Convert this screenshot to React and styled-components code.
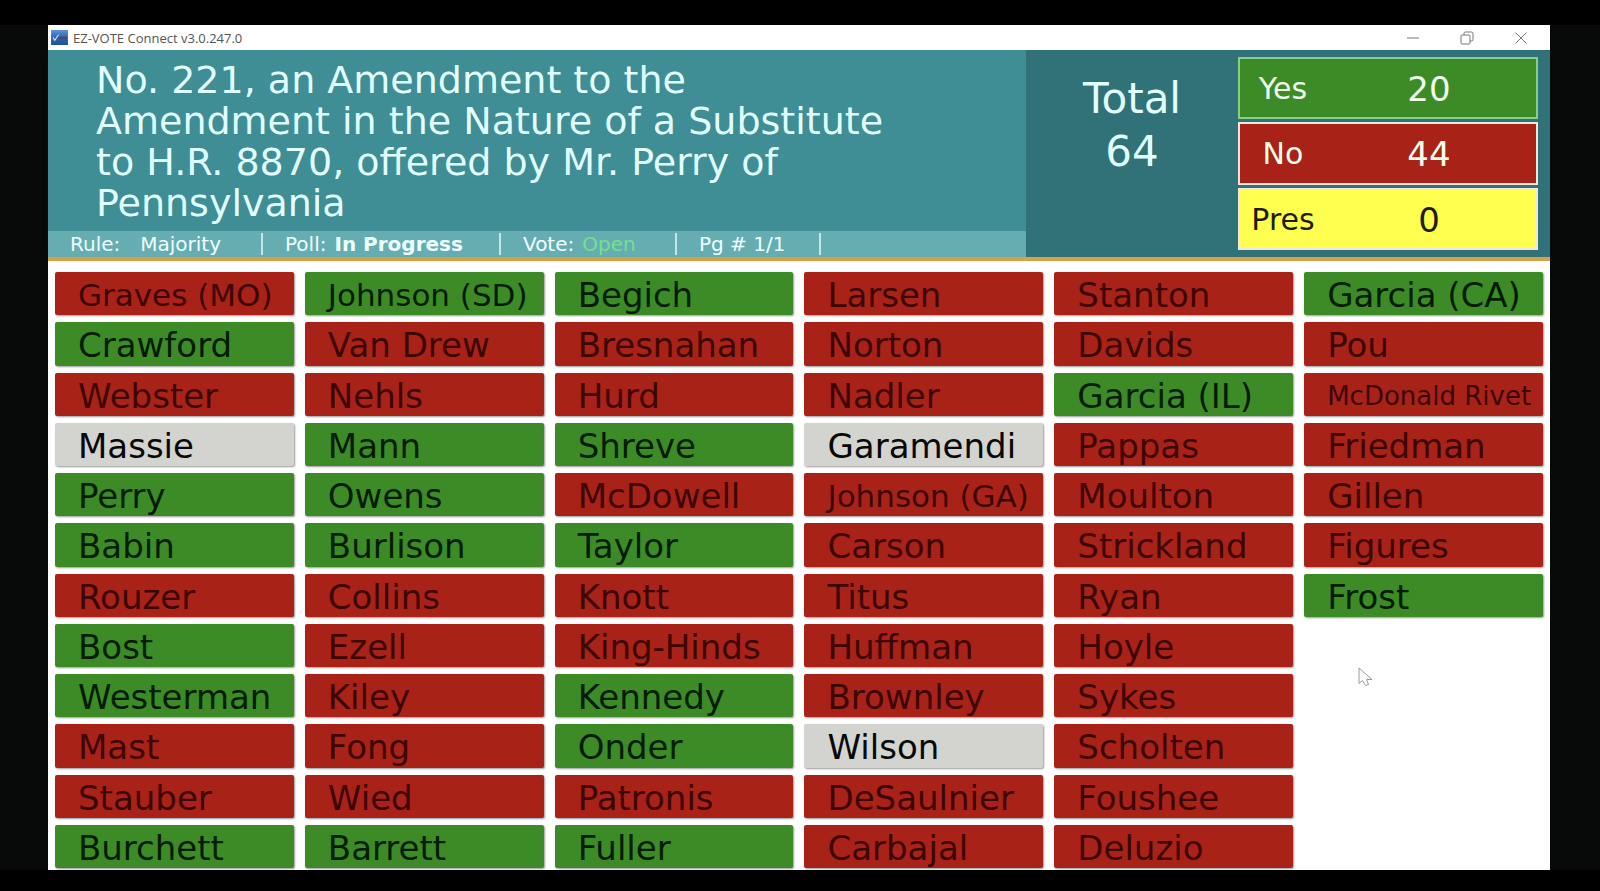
import React from 'react';
import styled, { createGlobalStyle } from 'styled-components';

const titleLines = [
  'No. 221, an Amendment to the',
  'Amendment in the Nature of a Substitute',
  'to H.R. 8870, offered by Mr. Perry of',
  'Pennsylvania',
];

const tallies = [
  { label: 'Yes', count: 20, kind: 'yes' },
  { label: 'No', count: 44, kind: 'no' },
  { label: 'Pres', count: 0, kind: 'present' },
];

// one array per column, y = yes, n = no, - = not voted
const columns = [
  ['n Graves (MO)', 'y Crawford', 'n Webster', '- Massie', 'y Perry', 'y Babin', 'n Rouzer', 'y Bost', 'y Westerman', 'n Mast', 'n Stauber', 'y Burchett'],
  ['y Johnson (SD)', 'n Van Drew', 'n Nehls', 'y Mann', 'y Owens', 'y Burlison', 'n Collins', 'n Ezell', 'n Kiley', 'n Fong', 'n Wied', 'y Barrett'],
  ['y Begich', 'n Bresnahan', 'n Hurd', 'y Shreve', 'n McDowell', 'y Taylor', 'n Knott', 'n King-Hinds', 'y Kennedy', 'y Onder', 'n Patronis', 'y Fuller'],
  ['n Larsen', 'n Norton', 'n Nadler', '- Garamendi', 'n Johnson (GA)', 'n Carson', 'n Titus', 'n Huffman', 'n Brownley', '- Wilson', 'n DeSaulnier', 'n Carbajal'],
  ['n Stanton', 'n Davids', 'y Garcia (IL)', 'n Pappas', 'n Moulton', 'n Strickland', 'n Ryan', 'n Hoyle', 'n Sykes', 'n Scholten', 'n Foushee', 'n Deluzio'],
  ['y Garcia (CA)', 'n Pou', 'n McDonald Rivet', 'n Friedman', 'n Gillen', 'n Figures', 'y Frost'],
];

const voteKinds = { y: 'yes', n: 'no', '-': 'none' };

const members = columns.flat().map((entry) => ({
  vote: voteKinds[entry[0]],
  name: entry.slice(2),
}));

// long names step down so they stay inside the tile
const nameSize = (name) => {
  if (name.length > 13) return 26;
  if (name.length > 11 || name === 'Graves (MO)') return 31;
  return 34;
};

export default function App() {
  return (
    <>
      <GlobalStyle />
      <Backdrop>
        <Window>
          <TitleBar>
            <AppIcon viewBox="0 0 18 16" aria-hidden="true">
              <defs>
                <linearGradient id="iconFill" x1="0" y1="0" x2="0" y2="1">
                  <stop offset="0" stopColor="#5b95dc" />
                  <stop offset="0.5" stopColor="#2f66b4" />
                  <stop offset="1" stopColor="#1d4f9c" />
                </linearGradient>
              </defs>
              <rect width="18" height="16" fill="url(#iconFill)" />
              <path d="M6 8.500h11" stroke="#44506e" strokeWidth="3" />
              <path d="M2 8l2 3 4-6" fill="none" stroke="#d6e8ff" strokeWidth="1.2" />
            </AppIcon>
            <AppName>EZ-VOTE Connect v3.0.247.0</AppName>
            <WindowButton aria-label="Minimize">
              <svg width="14" height="14" viewBox="0 0 14 14">
                <path d="M1 7h12" />
              </svg>
            </WindowButton>
            <WindowButton aria-label="Restore">
              <svg width="14" height="14" viewBox="0 0 14 14">
                <rect x="1" y="4" width="9" height="9" rx="1" />
                <path d="M4 4V2.500Q4 1 5.500 1H11.500Q13 1 13 2.500V8.500Q13 10 11.500 10H10" />
              </svg>
            </WindowButton>
            <WindowButton aria-label="Close">
              <svg width="14" height="14" viewBox="0 0 14 14">
                <path d="M1.500 1.500l11 11M12.500 1.500l-11 11" />
              </svg>
            </WindowButton>
          </TitleBar>

          <Header>
            <Question>
              <Title>
                {titleLines.map((line) => (
                  <span key={line}>{line} </span>
                ))}
              </Title>
              <StatusBar>
                <Status $width={215}>
                  <span>Rule:</span>
                  <span>Majority</span>
                </Status>
                <Status $width={238} $tight>
                  <span>Poll:</span>
                  <b>In Progress</b>
                </Status>
                <Status $width={176} $tight>
                  <span>Vote:</span>
                  <Open>Open</Open>
                </Status>
                <Status $width={144}>
                  <span>Pg # 1/1</span>
                </Status>
              </StatusBar>
            </Question>
            <Total>
              <span>Total</span>
              <span>64</span>
            </Total>
            <Tallies>
              {tallies.map((t) => (
                <Tally key={t.label} $kind={t.kind}>
                  <TallyLabel>{t.label}</TallyLabel>
                  <TallyCount>{t.count}</TallyCount>
                </Tally>
              ))}
            </Tallies>
          </Header>

          <Board>
            {members.map((m) => (
              <Member key={m.name} $vote={m.vote} $size={nameSize(m.name)}>
                {m.name}
              </Member>
            ))}
          </Board>

          <Pointer width="16" height="20" viewBox="0 0 16 20" aria-hidden="true">
            <path d="M1 1V16.500L4.500 13.500L7.500 18.500L10.500 17.500L8.500 12.500H14Z" />
          </Pointer>
        </Window>
      </Backdrop>
    </>
  );
}

// Styled Components
const GlobalStyle = createGlobalStyle`
  * {
    box-sizing: border-box;
  }

  body {
    margin: 0;
    background: #000;
    font-family: 'DejaVu Sans', sans-serif;
  }
`;

const voteColors = {
  yes: '#3d8b26',
  no: '#a92217',
  none: '#d3d3cf',
  present: '#ffff50',
};

const nameColors = {
  yes: '#041c04',
  no: '#3c0604',
  none: '#080808',
};

const Backdrop = styled.div`
  display: flex;
  min-height: 100vh;
  padding: 0 50px 0 48px;
  border-top: 25px solid #000;
  border-bottom: 21px solid #000;
  background: #080909;
`;

const Window = styled.main`
  position: relative;
  flex: 1;
  display: flex;
  flex-direction: column;
  background: #fff;
`;

const TitleBar = styled.div`
  display: flex;
  align-items: center;
  height: 25px;
  padding: 0 2px 0 3px;
`;

const AppIcon = styled.svg`
  width: 17px;
  height: 15px;
`;

const AppName = styled.span`
  flex: 1;
  margin-left: 5px;
  font-family: 'Open Sans', sans-serif;
  font-size: 13px;
  color: #555;
`;

const WindowButton = styled.button`
  display: flex;
  align-items: center;
  justify-content: center;
  width: 54px;
  height: 24px;
  padding: 0;
  border: none;
  background: none;

  svg {
    fill: none;
    stroke: #777;
  }
`;

const Header = styled.header`
  display: grid;
  grid-template-columns: 1fr 212px 312px;
  min-height: 211px;
  border-bottom: 4px solid #d9a048;
  background: #307278;
`;

const Question = styled.section`
  display: flex;
  flex-direction: column;
  background: #3f8d95;
`;

const Title = styled.h1`
  flex: 1;
  margin: 0;
  padding: 10px 20px 0 48px;
  font-size: 38px;
  font-weight: normal;
  line-height: 41px;
  color: #e2ffff;

  span {
    display: block;
  }
`;

const StatusBar = styled.div`
  display: flex;
  align-items: center;
  height: 26px;
  background: #66adb2;
  color: #eeffff;
  font-size: 20px;
  line-height: 22px;
`;

const Status = styled.div`
  display: flex;
  gap: ${({ $tight }) => ($tight ? '8px' : '20px')};
  width: ${({ $width }) => $width}px;
  padding-left: 22px;
  border-right: 2px solid #c4e6e8;
  white-space: nowrap;
`;

const Open = styled.span`
  color: #74e08c;
`;

const Total = styled.section`
  display: flex;
  flex-direction: column;
  align-items: center;
  padding-top: 22px;
  font-size: 42px;
  line-height: 53px;
  color: #e2ffff;
`;

const Tallies = styled.section`
  display: grid;
  gap: 3px;
  padding: 7px 12px 7px 0;
`;

const Tally = styled.div`
  display: grid;
  grid-template-columns: 86px 1fr;
  align-items: center;
  padding-right: 4px;
  border: 2px solid ${({ $kind }) => ($kind === 'yes' ? '#86cf8a' : '#f3e6e0')};
  background: ${({ $kind }) => voteColors[$kind]};
  color: ${({ $kind }) => ($kind === 'present' ? '#1c1c00' : '#f0ffec')};
  line-height: 40px;
  text-align: center;
`;

const TallyLabel = styled.span`
  padding-top: 2px;
  font-size: 30px;
`;

const TallyCount = styled.span`
  padding-top: 2px;
  font-size: 34px;
`;

const Board = styled.ul`
  flex: 1;
  display: grid;
  grid-template-rows: repeat(12, minmax(43px, 1fr));
  grid-template-columns: repeat(6, 1fr);
  grid-auto-flow: column;
  gap: 7px 11px;
  margin: 0;
  padding: 11px 7px 2px;
  list-style: none;
`;

const Member = styled.li`
  display: flex;
  align-items: center;
  min-width: 0;
  padding: 3px 0 0 23px;
  border-radius: 2px;
  background: ${({ $vote }) => voteColors[$vote]};
  box-shadow: 1px 1px 2px rgba(0, 0, 0, 0.4);
  color: ${({ $vote }) => nameColors[$vote]};
  font-size: ${({ $size }) => $size}px;
  line-height: 40px;
  white-space: nowrap;
`;

// mouse pointer resting over the empty part of the board
const Pointer = styled.svg`
  position: absolute;
  right: 176px;
  bottom: 183px;
  fill: #fff;
  stroke: #999;
`;
